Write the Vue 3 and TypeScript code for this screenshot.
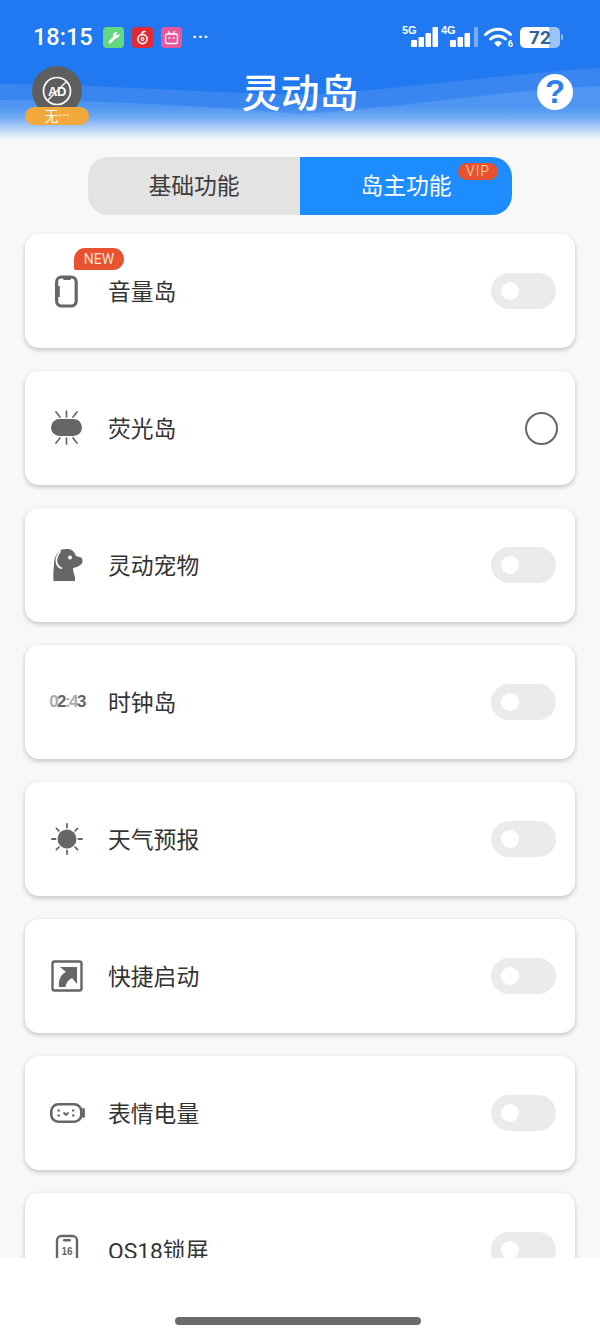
<script setup lang="ts">
interface Feature {
  name: string;
  icon: string;
  isNew?: boolean;
  radio?: boolean;
}

const features: Feature[] = [
  { name: "音量岛", icon: "phone", isNew: true },
  { name: "荧光岛", icon: "glow", radio: true },
  { name: "灵动宠物", icon: "dog" },
  { name: "时钟岛", icon: "clock" },
  { name: "天气预报", icon: "sun" },
  { name: "快捷启动", icon: "shortcut" },
  { name: "表情电量", icon: "battery" },
  { name: "OS18锁屏", icon: "lock" },
];

const rays = [0, 45, 90, 135, 180, 225, 270, 315];
</script>

<template>
  <div class="page">
    <main class="main">
      <header class="header">
        <svg class="waves" viewBox="0 0 600 140" preserveAspectRatio="none">
          <defs>
            <linearGradient id="fade" x1="0" y1="0" x2="0" y2="1">
              <stop offset="0" stop-color="#f8f8f8" stop-opacity="0" />
              <stop offset="0.3" stop-color="#f8f8f8" stop-opacity="0.16" />
              <stop offset="1" stop-color="#f8f8f8" stop-opacity="1" />
            </linearGradient>
          </defs>
          <path d="M0 84 C90 84 190 92 300 95 C400 90 500 74 600 68 V140 H0 Z" fill="#3a86f0" />
          <path d="M0 100 C100 100 200 106 300 114 C400 108 500 90 600 86 V140 H0 Z" fill="#4f96f3" />
          <rect x="0" y="106" width="600" height="34" fill="url(#fade)" />
        </svg>

        <div class="status">
          <span class="time">18:15</span>
          <div class="apps">
            <svg class="app" viewBox="0 0 21 21">
              <rect width="21" height="21" rx="4" fill="#62d882" />
              <path d="M7 15 L12 10" stroke="#fff" stroke-width="3" stroke-linecap="round" />
              <path d="M10 8 a3.6 3.6 0 0 1 4.6 -3 l-1.8 2 1.6 1.6 2 -1.8 a3.6 3.6 0 0 1 -4.4 4.4 Z" fill="#fff" />
            </svg>
            <svg class="app" viewBox="0 0 21 21">
              <rect width="21" height="21" rx="4" fill="#e22a35" />
              <circle cx="10.5" cy="12" r="4.6" fill="none" stroke="#fff" stroke-width="1.6" />
              <circle cx="10.5" cy="12" r="1.4" fill="none" stroke="#fff" stroke-width="1.2" />
              <path d="M12.8 4.5 C10.5 4.5 9.4 6 9.9 8" fill="none" stroke="#fff" stroke-width="1.6" stroke-linecap="round" />
            </svg>
            <svg class="app" viewBox="0 0 21 21">
              <rect width="21" height="21" rx="4" fill="#e9569a" />
              <rect x="4.5" y="7" width="12" height="9.5" rx="2" fill="none" stroke="#fff" stroke-width="1.4" />
              <path d="M7.5 4.5 L9 7 M13.5 4.5 L12 7" stroke="#fff" stroke-width="1.3" stroke-linecap="round" />
              <path d="M8 11 H8.8 M12.2 11 H13" stroke="#fff" stroke-width="1.5" stroke-linecap="round" />
            </svg>
          </div>
          <span class="more">···</span>

          <div class="indicators">
            <div class="signal">
              <span class="net">5G</span>
              <svg class="bars" viewBox="0 0 30 20" width="30" height="20">
                <rect x="1" y="13" width="6" height="7" rx="1" fill="#fff" />
                <rect x="8.5" y="10" width="5.5" height="10" rx="1" fill="#fff" />
                <rect x="15.5" y="6" width="5.5" height="14" rx="1" fill="#fff" />
                <rect x="22.5" y="0" width="5.5" height="20" rx="1" fill="#fff" />
              </svg>
            </div>
            <div class="signal">
              <span class="net">4G</span>
              <svg class="bars" viewBox="0 0 30 20" width="30" height="20">
                <rect x="1" y="13" width="6" height="7" rx="1" fill="#fff" />
                <rect x="8.5" y="10" width="5.5" height="10" rx="1" fill="#fff" />
                <rect x="15.5" y="6" width="5.5" height="14" rx="1" fill="#fff" />
                <rect x="25" y="0" width="4" height="20" rx="1" fill="#fff" fill-opacity=".4" />
              </svg>
            </div>
            <div class="wifi">
              <svg viewBox="0 0 28 20" width="28" height="20">
                <path d="M1.5 7.5 C8.5 0.5 19.5 0.5 26.5 7.5" fill="none" stroke="#fff" stroke-width="3" stroke-linecap="round" />
                <path d="M6.5 12 C11 8 17 8 21.5 12" fill="none" stroke="#fff" stroke-width="3" stroke-linecap="round" />
                <path d="M10 16 C12.5 13.2 15.5 13.2 18 16 L14 20 Z" fill="#fff" />
              </svg>
              <span class="wifi-num">6</span>
            </div>
            <div class="battery">
              <div class="battery-body"><span class="battery-num">72</span></div>
              <span class="battery-cap"></span>
            </div>
          </div>
        </div>

        <div class="title-row">
          <div class="ad">
            <div class="ad-circle">
              <svg viewBox="0 0 30 30" width="30" height="30">
                <circle cx="15" cy="15" r="13.5" fill="none" stroke="#fff" stroke-width="1.7" />
                <path d="M5.5 24.5 L24.5 5.5" stroke="#fff" stroke-width="1.3" />
                <text x="15" y="20" text-anchor="middle" class="ad-text">AD</text>
              </svg>
            </div>
            <div class="ad-tag">无···</div>
          </div>
          <h1 class="title">灵动岛</h1>
          <div class="help">?</div>
        </div>
      </header>

      <div class="tabs">
        <div class="tab tab-left"><span class="tab-text">基础功能</span></div>
        <div class="tab tab-right">
          <span class="tab-text">岛主功能</span>
          <span class="vip">VIP</span>
        </div>
      </div>

      <section class="list">
        <div v-for="item in features" :key="item.name" class="card">
          <span v-if="item.isNew" class="new">NEW</span>
          <div class="icon">
            <svg v-if="item.icon === 'phone'" viewBox="0 0 48 48" width="48" height="48">
              <rect x="13.6" y="10" width="19.6" height="29" rx="5" fill="none" stroke="#666" stroke-width="3.2" />
              <path d="M15 19 h1.8 v11 H15 Z" fill="#666" />
              <path d="M20 11 h8 v.6 a1.4 1.4 0 0 1 -1.4 1.4 h-5.2 a1.4 1.4 0 0 1 -1.4 -1.4 Z" fill="#666" />
            </svg>
            <svg v-else-if="item.icon === 'glow'" viewBox="0 0 48 48" width="48" height="48">
              <rect x="8" y="15" width="31" height="17" rx="8.5" fill="#666" />
              <path d="M23.5 7 V13 M23.5 34 V40 M13 8 L17 13 M34 8 L30 13 M13 39 L17 34 M34 39 L30 34" stroke="#666" stroke-width="1.7" stroke-linecap="round" />
            </svg>
            <svg v-else-if="item.icon === 'dog'" viewBox="0 0 48 48" width="48" height="48">
              <path d="M15 11.5 C17 8.5 21 7.5 25 8 C29.5 8.5 32 11.5 33 15 L38 16.5 C40 17.5 40 21.5 38.5 23 C36 25.5 33 26.5 30 27 C30 30 31 33 32 36 L32 40 L10.5 40 C10 34 10.5 28 11 24 C10.8 19 12.5 14.5 15 11.5 Z" fill="#666" />
              <path d="M17.5 10 C14.5 13.5 13 18 13.6 21.5 C14.2 24.5 16 26.5 19 27.5" fill="none" stroke="#fff" stroke-width="1.7" />
              <circle cx="27" cy="16.5" r="2" fill="#fff" />
            </svg>
            <span v-else-if="item.icon === 'clock'" class="clock"><i>0</i>2<i>:4</i>3</span>
            <svg v-else-if="item.icon === 'sun'" viewBox="0 0 48 48" width="48" height="48">
              <circle cx="24" cy="24" r="9.5" fill="#666" />
              <g v-for="r in rays" :key="r" :transform="`rotate(${r} 24 24)`">
                <path d="M24 9 V12.5" stroke="#666" stroke-width="1.8" stroke-linecap="round" />
              </g>
            </svg>
            <svg v-else-if="item.icon === 'shortcut'" viewBox="0 0 48 48" width="48" height="48">
              <rect x="9.5" y="9.5" width="29" height="29" rx="2" fill="none" stroke="#666" stroke-width="2.4" />
              <path d="M17 15 H34 V32 L29 26 C25 28 23 31 22.5 35 L16 35 C15 28 18 22 23 20 Z" fill="#666" />
            </svg>
            <svg v-else-if="item.icon === 'battery'" viewBox="0 0 48 48" width="48" height="48">
              <rect x="8.3" y="15.3" width="30" height="17.4" rx="7" fill="none" stroke="#666" stroke-width="2.6" />
              <path d="M40.5 20.5 V27.5" stroke="#666" stroke-width="2.8" stroke-linecap="round" />
              <path d="M14.5 21.5 h2.4 M14.5 26.5 h2.4 M29 21.5 h2.4 M29 26.5 h2.4 M20.5 23.5 l2.5 2.5 l2.5 -2.5" fill="none" stroke="#666" stroke-width="1.8" />
            </svg>
            <svg v-else viewBox="0 0 48 48" width="48" height="48">
              <rect x="14" y="10" width="20" height="34" rx="4.5" fill="none" stroke="#666" stroke-width="2.4" />
              <rect x="20" y="13" width="8" height="2.4" rx="1.2" fill="#666" />
              <text x="24" y="29" text-anchor="middle" class="lock-text">16</text>
            </svg>
          </div>
          <span class="label">{{ item.name }}</span>
          <span v-if="item.radio" class="radio"></span>
          <span v-else class="toggle"><span class="knob"></span></span>
        </div>
      </section>
    </main>

    <footer class="nav">
      <span class="pill"></span>
    </footer>
  </div>
</template>

<style>
html,
body {
  margin: 0;
  background: #fff;
}
</style>

<style scoped>
.page {
  width: 600px;
  height: 1335px;
  display: flex;
  flex-direction: column;
  overflow: hidden;
  font-family: Roboto, "Noto Sans CJK SC", sans-serif;
  color: #333;
}

.main {
  height: 1258px;
  overflow: hidden;
  background: #f8f8f8;
}

.header {
  position: relative;
  height: 140px;
  background: #2079f0;
  box-sizing: border-box;
  padding: 0 25px;
}

.waves {
  position: absolute;
  left: 0;
  top: 0;
  width: 100%;
  height: 100%;
}

.status {
  position: relative;
  height: 60px;
  padding: 14px 12px 0 8px;
  box-sizing: border-box;
  display: flex;
  align-items: center;
  color: #fff;
}

.time {
  font-size: 23.5px;
  font-weight: 500;
  width: 70px;
}

.apps {
  display: flex;
  gap: 8px;
}

.app {
  width: 21px;
  height: 21px;
}

.more {
  font-size: 17px;
  font-weight: 700;
  margin-left: 10px;
  letter-spacing: 0.5px;
  line-height: 1;
}

.indicators {
  margin-left: auto;
  display: flex;
  align-items: center;
}

.signal {
  position: relative;
  width: 39px;
  height: 20px;
}

.net {
  position: absolute;
  left: 0;
  top: -2px;
  font-size: 11px;
  font-weight: 700;
  line-height: 11px;
  font-family: "Liberation Sans", sans-serif;
}

.bars {
  position: absolute;
  left: 8px;
  top: 0;
}

.wifi {
  position: relative;
  width: 28px;
  height: 20px;
  margin-left: 4px;
}

.wifi svg {
  display: block;
}

.wifi-num {
  position: absolute;
  right: -1px;
  bottom: -2px;
  font-size: 9px;
  font-weight: 700;
  line-height: 10px;
}

.battery {
  display: flex;
  align-items: center;
  margin-left: 8px;
}

.battery-body {
  width: 40px;
  height: 21px;
  border-radius: 5px;
  background: linear-gradient(90deg, #fff 0 72%, #9cc3f8 72% 100%);
  display: flex;
  align-items: center;
  justify-content: center;
}

.battery-num {
  font-size: 19px;
  font-weight: 700;
  line-height: 1;
  color: #31609f;
}

.battery-cap {
  width: 2px;
  height: 6px;
  margin-left: 1px;
  background: #9cc3f8;
  border-radius: 0 2px 2px 0;
}

.title-row {
  position: relative;
  height: 68px;
  margin-top: 2px;
  display: flex;
  align-items: center;
  justify-content: space-between;
}

.ad {
  position: relative;
  width: 64px;
  height: 64px;
  margin-top: -6px;
}

.ad-circle {
  width: 50px;
  height: 50px;
  margin: 5px 0 0 7px;
  border-radius: 50%;
  background: #5e5e5e;
  display: flex;
  align-items: center;
  justify-content: center;
}

.ad-text {
  font-family: "Liberation Sans", sans-serif;
  font-size: 13px;
  font-weight: 700;
  letter-spacing: -0.5px;
  fill: #fff;
}

.ad-tag {
  position: absolute;
  left: 0;
  top: 46px;
  width: 64px;
  height: 18px;
  border-radius: 9px;
  background: #f2a93b;
  color: #fff;
  font-size: 14px;
  line-height: 18px;
  text-align: center;
}

.title {
  position: absolute;
  left: 0;
  right: 0;
  top: 8px;
  margin: 0;
  text-align: center;
  font-size: 39px;
  line-height: 48px;
  font-weight: 500;
  color: #fff;
}

.help {
  position: relative;
  width: 36px;
  height: 36px;
  margin-right: 2px;
  margin-top: -8px;
  border-radius: 50%;
  background: #fff;
  color: #2f7fe8;
  font-family: "Liberation Sans", sans-serif;
  font-size: 33px;
  font-weight: 700;
  line-height: 36px;
  text-align: center;
}

.tabs {
  width: 424px;
  height: 58px;
  margin: 17px auto 0;
  display: flex;
  border-radius: 20px;
  overflow: hidden;
}

.tab {
  flex: 0 0 212px;
  display: flex;
  align-items: center;
  justify-content: center;
  font-size: 22.8px;
}

.tab-text {
  margin-bottom: 3px;
}

.tab-left {
  background: #e3e3e3;
  color: #3c3c3c;
}

.tab-right {
  position: relative;
  background: #1c8cff;
  color: #fff;
}

.vip {
  position: absolute;
  left: 158px;
  top: 6px;
  width: 40px;
  height: 17px;
  border-radius: 9px;
  background: #e8522f;
  color: #ffe6c4;
  font-size: 14px;
  font-weight: 300;
  line-height: 17px;
  text-align: center;
  letter-spacing: 1px;
}

.list {
  margin-top: 19px;
  padding: 0 25px;
  display: flex;
  flex-direction: column;
  gap: 23px;
}

.card {
  position: relative;
  flex: 0 0 114px;
  display: flex;
  align-items: center;
  padding: 0 19px 0 18px;
  background: #fff;
  border-radius: 14px;
  box-shadow: 0 2px 5px rgba(0, 0, 0, 0.22);
}

.new {
  position: absolute;
  left: 49px;
  top: 14px;
  width: 50px;
  height: 22px;
  border-radius: 11px 11px 11px 2px;
  background: #e8522f;
  color: #ffe3d6;
  font-size: 14px;
  line-height: 22px;
  text-align: center;
}

.icon {
  width: 48px;
  height: 48px;
  display: flex;
  align-items: center;
  justify-content: center;
}

.clock {
  font-family: "Liberation Sans", sans-serif;
  font-size: 17px;
  font-weight: 700;
  letter-spacing: -1.6px;
  color: #666;
  white-space: nowrap;
}

.clock i {
  font-style: normal;
  opacity: 0.55;
}

.lock-text {
  font-family: "Liberation Sans", sans-serif;
  font-size: 10px;
  font-weight: 700;
  fill: #666;
}

.label {
  margin-left: 17px;
  margin-bottom: 2px;
  font-size: 22.8px;
  color: #333;
}

.toggle {
  margin-left: auto;
  width: 65px;
  height: 36px;
  border-radius: 18px;
  background: #ebebeb;
  display: flex;
  align-items: center;
  padding-left: 10px;
  box-sizing: border-box;
}

.knob {
  width: 18px;
  height: 18px;
  border-radius: 50%;
  background: #fff;
}

.radio {
  margin-left: auto;
  width: 33px;
  height: 33px;
  border-radius: 50%;
  border: 2px solid #666;
  box-sizing: border-box;
  margin-right: -2px;
}

.nav {
  flex: 1;
  background: #fff;
  display: flex;
  justify-content: center;
  padding-top: 59px;
  padding-right: 5px;
  box-sizing: border-box;
}

.pill {
  width: 246px;
  height: 8px;
  border-radius: 4px;
  background: #6b6b6b;
}
</style>
